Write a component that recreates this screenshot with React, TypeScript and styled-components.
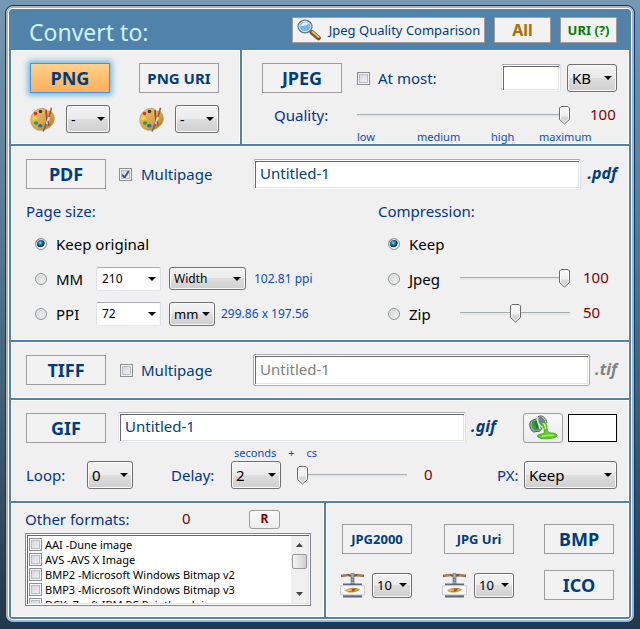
import React from 'react';
import styled, { createGlobalStyle, css } from 'styled-components';

const svgUrl = (svg: string) => `url("data:image/svg+xml,${encodeURIComponent(svg)}")`;

const thumbArt = svgUrl(
  `<svg xmlns="http://www.w3.org/2000/svg" width="11" height="19" viewBox="0 0 11 19"><defs><linearGradient id="g" x1="0" y1="0" x2="0" y2="1"><stop offset="0" stop-color="#fafafa"/><stop offset=".55" stop-color="#eeeeee"/><stop offset=".6" stop-color="#d8d8d8"/><stop offset="1" stop-color="#cfcfcf"/></linearGradient></defs><path d="M2 .5H9L10.500 2V13.500L5.500 18L.5 13.500V2Z" fill="url(#g)" stroke="#6b6b6b"/><path d="M1.500 2V13L5.500 16.700L9.500 13V2" fill="none" stroke="#fff" stroke-width=".8"/></svg>`
);
const tickArt = svgUrl(
  `<svg xmlns="http://www.w3.org/2000/svg" width="9" height="9" viewBox="0 0 9 9"><path d="M1.200 4.600L3.500 7.600L8 .8" fill="none" stroke="#3f4d8c" stroke-width="1.900"/></svg>`
);

const GlobalStyle = createGlobalStyle`
  * { box-sizing: border-box; }
  html { min-height: 100%; background: linear-gradient(#7599b3, #4d6d86 50%, #22384b); }
  body { margin: 0; font: 15px/20px "Noto Sans", "Open Sans", sans-serif; color: #003399; }
  button, input, select { font-family: inherit; margin: 0; }
`;

const Frame = styled.main`
  margin: 5px 5px 6px;
  padding: 5px;
  border: 1px solid #003c80;
  border-radius: 8px;
  background: #5182aa;
  box-shadow: inset 0 0 0 2px #b3b3b5, inset 0 0 0 3px #fff;
  display: grid;
  gap: 2px;
`;

const Header = styled.header`
  height: 37px;
  padding: 0 12px 0 18px;
  display: flex;
  align-items: center;
  gap: 9px;
`;

const Title = styled.h1`
  margin: 0 auto 0 0;
  font-size: 23px;
  line-height: 32px;
  font-weight: 400;
  color: #cdf3ff;
  padding-top: 5px;
`;

const Split = styled.div<{ $cols: string }>`
  display: grid;
  grid-template-columns: ${p => p.$cols};
  gap: 2px;
`;

const Panel = styled.section<{ $pad: string }>`
  background: #f0f0f0;
  border: 1px solid #fff;
  padding: ${p => p.$pad};
  min-width: 0;
`;

const Row = styled.div<{ $gap?: number; $top?: number; $indent?: number; $h?: number }>`
  display: flex;
  align-items: center;
  gap: ${p => p.$gap ?? 0}px;
  margin-top: ${p => p.$top ?? 0}px;
  padding-left: ${p => p.$indent ?? 0}px;
  ${p => p.$h && css`height: ${p.$h}px;`}
`;

const Spacer = styled.span`
  flex: 1;
`;

const FormatButton = styled.button<{ $size?: number; $w?: number; $active?: boolean }>`
  flex: none;
  width: ${p => p.$w ?? 80}px;
  height: 30px;
  padding: 0;
  border: 1px solid #9d9d9d;
  background: #f2f2f2;
  color: #003c80;
  font-size: ${p => p.$size ?? 18}px;
  line-height: 28px;
  font-weight: 700;
  white-space: nowrap;
  ${p => p.$active && css`
    border-color: #3c94f0;
    background: linear-gradient(#ffd08a, #ffae5a);
    box-shadow: 0 0 6px 2px #6cb4d8;
  `}
`;

const HeaderButton = styled.button<{ $w: number; $color: string; $size: number; $bold?: boolean }>`
  width: ${p => p.$w}px;
  height: 26px;
  margin-top: 1px;
  padding: 0;
  border: 1px solid #9d9d9d;
  background: #f2f2f2;
  color: ${p => p.$color};
  font-size: ${p => p.$size}px;
  font-weight: ${p => (p.$bold ? 700 : 400)};
  display: flex;
  align-items: center;
  justify-content: center;
  gap: 8px;
  white-space: nowrap;
`;

const FormatGroup = styled.div`
  display: grid;
  gap: 12px;
  width: 80px;
`;

const IconRow = styled.div`
  display: flex;
  align-items: center;
  justify-content: space-between;
`;

const SelectBox = styled.span<{ $w: number; $h: number; $plain?: boolean }>`
  position: relative;
  flex: none;
  display: inline-flex;
  width: ${p => p.$w}px;
  height: ${p => p.$h}px;
  &::after {
    content: '';
    position: absolute;
    right: 5px;
    top: calc(50% - 2px);
    border: solid transparent;
    border-width: 4px 4px 0;
    border-top-color: #000;
    pointer-events: none;
  }
  select {
    appearance: none;
    width: 100%;
    height: 100%;
    padding: 0 4px;
    border: 1px solid #707070;
    border-radius: 3px;
    color: #000;
    background: linear-gradient(#f2f2f2, #ebebeb 50%, #dddddd 50%, #cfcfcf);
    box-shadow: inset 0 0 0 1px #fafafa;
    ${p => p.$plain && css`
      background: #fff;
      border-color: #abadb3 #dbdfe6 #e3e9ef #e2e3ea;
      border-radius: 2px;
      padding-left: 5px;
    `}
  }
`;

const SizedSelect = styled.select<{ $size: number }>`
  font-size: ${p => p.$size}px;
`;

const TextInput = styled.input<{ $w?: number; $h?: number }>`
  ${p => (p.$w ? css`width: ${p.$w}px; flex: none;` : css`flex: 1; min-width: 0; width: 0;`)}
  height: ${p => p.$h ?? 31}px;
  padding: 0 6px 3px;
  border: 1px solid;
  border-color: #abadb3 #dbdfe6 #e3e9ef #e2e3ea;
  border-radius: 2px;
  background: #fff;
  box-shadow: inset 0 0 0 1px #fff, inset 2px 2px 0 #696969, inset 0 0 0 2px #e3e3e3;
  color: #004080;
  font-size: 15px;
  &:disabled { color: #808080; border-color: #abadb3; }
`;

const Extension = styled.span<{ $muted?: boolean }>`
  font-size: 16px;
  font-weight: 700;
  font-style: italic;
  padding-bottom: 3px;
  color: ${p => (p.$muted ? '#808080' : '#003c80')};
`;

const Check = styled.input`
  appearance: none;
  flex: none;
  width: 13px;
  height: 13px;
  border: 1px solid #8e8f8f;
  background: linear-gradient(135deg, #cdd0d6, #f6f6f6);
  box-shadow: inset 0 0 0 1px #f4f4f4, inset 0 0 0 2px #b9bcc3;
  &:checked { background: ${tickArt} center no-repeat, linear-gradient(135deg, #cdd0d6, #f6f6f6); }
`;

const Radio = styled.input`
  appearance: none;
  flex: none;
  width: 12px;
  height: 12px;
  border: 1px solid #8e8f8f;
  border-radius: 50%;
  background: radial-gradient(circle at 60% 60%, #f0f0f0, #cfd2d6 70%);
  box-shadow: inset 0 0 0 1px #f6f6f6;
  &:checked { background: radial-gradient(circle at 42% 38%, #8fe2f8 0, #2089b4 20%, #0c3a5c 42%, #12405f 50%, #e6e6e6 56%); }
`;

const Choice = styled.label<{ $gap: number; $color?: string; $w?: number }>`
  display: inline-flex;
  align-items: center;
  gap: ${p => p.$gap}px;
  color: ${p => p.$color ?? '#000'};
  white-space: nowrap;
  ${p => p.$w && css`width: ${p.$w}px;`}
`;

const Slider = styled.input`
  appearance: none;
  flex: 1;
  min-width: 0;
  width: 0;
  height: 19px;
  background: linear-gradient(#a8acae, #a8acae) 0 8px / 100% 1px no-repeat, linear-gradient(#e4e8e8, #e4e8e8) 0 9px / 100% 2px no-repeat;
  &::-webkit-slider-thumb {
    appearance: none;
    width: 11px;
    height: 19px;
    background: ${thumbArt} center no-repeat;
  }
`;

const Value = styled.output<{ $w: number }>`
  width: ${p => p.$w}px;
  padding-bottom: 3px;
  color: #800000;
`;

const Ticks = styled.div`
  display: grid;
  grid-template-columns: 60fr 74fr 48fr 78fr;
  margin: 4px 0 0 95px;
  font-size: 11px;
  line-height: 13px;
  color: #0c4acb;
`;

const Columns = styled.div`
  display: grid;
  grid-template-columns: 352fr 239fr;
  margin-top: 12px;
`;

const Heading = styled.h2`
  margin: 0 0 5px;
  font-size: 15px;
  line-height: 20px;
  font-weight: 400;
`;

const Note = styled.span`
  font-size: 12px;
  color: #0c4acb;
  white-space: nowrap;
`;

const DelayGrid = styled.div`
  display: grid;
  grid-template-columns: auto minmax(0, 1fr);
  column-gap: 16px;
  flex: 1;
  min-width: 0;
`;

const Units = styled.div`
  grid-column: 1 / -1;
  display: flex;
  gap: 12px;
  padding-left: 3px;
  font-size: 11px;
  line-height: 20px;
  height: 18px;
  color: #0c4acb;
`;

const LabelText = styled.label<{ $w?: number }>`
  white-space: nowrap;
  ${p => p.$w && css`width: ${p.$w}px;`}
`;

const BucketButton = styled.button`
  flex: none;
  width: 40px;
  height: 30px;
  padding: 0;
  border: 1px solid #9d9d9d;
  border-radius: 3px;
  background: linear-gradient(#f8f8f8, #ececf0);
  display: grid;
  place-items: center;
`;

const Swatch = styled.button`
  flex: none;
  width: 49px;
  height: 28px;
  padding: 0;
  border: 1px solid #000;
  background: #fff;
`;

const ResetButton = styled.button`
  width: 31px;
  height: 19px;
  padding: 0;
  border: 1px solid #9d9d9d;
  border-radius: 3px;
  background: linear-gradient(#fafafa, #ececec);
  color: #800000;
  font-size: 12px;
  line-height: 16px;
  font-weight: 700;
`;

const ListFrame = styled.div`
  display: flex;
  height: 73px;
  margin-top: 4px;
  border: 1px solid #828790;
  padding: 2px;
  background: #fff;
  box-shadow: inset 0 0 0 1px #fff, inset 2px 2px 0 #696969, inset 0 0 0 2px #e3e3e3;
`;

const FormatList = styled.ul`
  flex: 1;
  min-width: 0;
  margin: 0;
  padding: 1px 0 0 1px;
  list-style: none;
  overflow: hidden;
  li { display: flex; height: 15px; font-size: 11px; line-height: 15px; }
`;

const ScrollBar = styled.div`
  width: 17px;
  background: #f0f0f0;
  display: flex;
  flex-direction: column;
  align-items: center;
`;

const ScrollThumb = styled.span`
  width: 15px;
  height: 15px;
  margin-bottom: auto;
  border: 1px solid #979797;
  border-radius: 2px;
  background: linear-gradient(90deg, #f5f5f5, #e3e3e3 50%, #cfcfcf);
`;

const ScrollArrow = styled.button`
  width: 17px;
  height: 18px;
  padding: 0;
  border: 0;
  background: none;
  display: grid;
  place-items: center;
`;

const ButtonGrid = styled.div`
  display: grid;
  grid-template-columns: 72px 72px 70px;
  justify-content: space-between;
  align-items: center;
  row-gap: 16px;
`;

const Cell = styled.div`
  display: flex;
  align-items: center;
  justify-content: space-between;
`;

const EndCell = styled.div`
  display: flex;
  justify-content: flex-end;
`;

const Palette = () => (
  <svg width="25" height="25" viewBox="0 0 25 25" aria-hidden="true">
    <defs>
      <linearGradient id="wood" x1="0" y1="0" x2="1" y2="1">
        <stop offset="0" stopColor="#efcc86" />
        <stop offset=".6" stopColor="#d5a044" />
        <stop offset="1" stopColor="#a9701e" />
      </linearGradient>
    </defs>
    <path d="M.8 14C.3 7.500 5 2 12 1.300C15 1 16.500 3 18 4.500C20.500 3 24 6 24.300 11C24.600 17 18.500 23 11 23.300C5 23.500 1.200 19.500.8 14Z" fill="url(#wood)" stroke="#b98f4a" strokeWidth=".6" />
    <circle cx="10.500" cy="4.500" r="1.800" fill="#463b30" />
    <circle cx="5.500" cy="6.500" r="1.800" fill="#d9352b" />
    <ellipse cx="4.500" cy="11.300" rx="2.200" ry="1.700" fill="#f2dc18" />
    <ellipse cx="6" cy="16" rx="2.200" ry="1.700" fill="#2d9f3c" />
    <ellipse cx="10.200" cy="18.800" rx="2.200" ry="1.700" fill="#2468ba" />
    <path d="M21.500.7L18.800 11" stroke="#8f5b3c" strokeWidth="1.500" />
    <path d="M16 3L17 14L15 20" fill="none" stroke="#b7372c" strokeWidth="1.600" />
    <path d="M19 10L16.500 17" stroke="#dfe5eb" strokeWidth="2" />
    <path d="M16.500 17L13 24.500" stroke="#596c86" strokeWidth="1.600" />
    <path d="M18 14L19 19" stroke="#9c4f2e" strokeWidth="1.300" />
  </svg>
);

const Magnifier = () => (
  <svg width="24" height="22" viewBox="0 0 24 22" aria-hidden="true">
    <path d="M13 12L15.500 14" stroke="#898989" strokeWidth="3" />
    <path d="M15 13.500L21.500 19" stroke="#79522c" strokeWidth="4.600" strokeLinecap="round" />
    <path d="M15.500 13L21.500 18" stroke="#e4b864" strokeWidth="2" strokeLinecap="round" />
    <ellipse cx="8" cy="7.500" rx="7" ry="6.300" fill="#78b5e4" stroke="#6b7983" strokeWidth="1.300" />
    <ellipse cx="8" cy="7.500" rx="5.800" ry="5.100" fill="none" stroke="#d8e9f4" />
    <path d="M3.500 7C4.500 3.500 9 2 12 4.500C10 6.500 6.500 7 3.500 7Z" fill="#d8efff" />
  </svg>
);

const Bucket = () => (
  <svg width="29" height="25" viewBox="0 0 29 25" aria-hidden="true">
    <path d="M2 6C-.5 9 1 15 4.500 17L11 16L16 9L11 2Z" fill="#9ba4ae" stroke="#4c5561" />
    <path d="M3.500 6.500C2 10 3 14 6.500 15.500L11 14L8 5Z" fill="#2fa52c" />
    <path d="M5 7L10 5L12.500 12L8 14Z" fill="#168222" />
    <path d="M8 3L11 14" stroke="#e8ecef" strokeWidth="1.500" />
    <ellipse cx="13" cy="6.500" rx="3.800" ry="6" transform="rotate(-28 13 6.500)" fill="#77818d" stroke="#d8dce0" strokeWidth="1.500" />
    <path d="M9 2C13-1 17 3 18 8" fill="none" stroke="#525c67" />
    <path d="M11 7C15 7 18 8 18 12C18 16 19 18 23 18C29 18.500 30 22 24 23C18 24.500 9 24 8.500 21C8.500 18.500 15 20 15.500 17L14.500 11Z" fill="#65ce25" stroke="#2d9a19" strokeWidth=".8" />
    <path d="M14 8.500C16.500 9 16.500 11 16.500 14" fill="none" stroke="#c8f684" strokeWidth="1.300" />
    <path d="M13 21.300C17 20.500 21 20 25 20.300" fill="none" stroke="#b1f05a" strokeWidth="1.300" />
  </svg>
);

const Press = () => (
  <svg width="25" height="25" viewBox="0 0 25 25" aria-hidden="true">
    <path d="M1 2.800L8 2L12 3L17 2L24 2.800" fill="none" stroke="#80583a" strokeWidth="2.300" />
    <path d="M2 2H8M17 2H23" stroke="#c8a579" />
    <rect x="11" y="0" width="3" height="11" fill="#a9b1be" stroke="#5d6878" strokeWidth=".6" />
    <path d="M11 5L14 6M11 7.500L14 8.500" stroke="#4a566a" strokeWidth=".8" />
    <rect x="3" y="10.500" width="19" height="1.800" fill="#5c687c" />
    <rect x=".5" y="12.800" width="24" height="9" fill="#fafafa" stroke="#c5c5c5" strokeWidth=".8" />
    <path d="M5 17.500C8 14.500 15 14 20 16C19 19 11 20.500 7 19Z" fill="#d99a45" />
    <path d="M10 16L16 15.500L14 18.500L9 18.500Z" fill="#9a5228" />
    <path d="M7 17.500L12 17" stroke="#f3c642" strokeWidth="1.300" />
    <rect x="3" y="22.300" width="19" height="2.200" fill="#5c687c" />
  </svg>
);

type DropProps = { w: number; h?: number; size?: number; value: string; label: string; plain?: boolean; id?: string };
const Drop = ({ w, h = 28, size = 15, value, label, plain, id }: DropProps) => (
  <SelectBox $w={w} $h={h} $plain={plain}>
    <SizedSelect $size={size} id={id} aria-label={label} defaultValue={value}>
      <option>{value}</option>
    </SizedSelect>
  </SelectBox>
);

const PALETTE_FORMATS = [
  { name: 'PNG', size: 18, active: true },
  { name: 'PNG URI', size: 15, active: false },
];

const OTHER_FORMATS = [
  'AAI -Dune image',
  'AVS -AVS X Image',
  'BMP2 -Microsoft Windows Bitmap v2',
  'BMP3 -Microsoft Windows Bitmap v3',
  'DCX -Zsoft IBM PC Paintbrush image',
];

export default function App() {
  return (
    <>
      <GlobalStyle />
      <Frame>
        <Header>
          <Title>Convert to:</Title>
          <HeaderButton $w={193} $color="#003c80" $size={13}>
            <Magnifier />
            Jpeg Quality Comparison
          </HeaderButton>
          <HeaderButton $w={57} $color="#b86b00" $size={16} $bold>All</HeaderButton>
          <HeaderButton $w={57} $color="#008000" $size={13} $bold>URI (?)</HeaderButton>
        </Header>

        <Split $cols="229fr 387fr">
          <Panel $pad="12px 18px 10px">
            <Row $gap={29}>
              {PALETTE_FORMATS.map(f => (
                <FormatGroup key={f.name}>
                  <FormatButton $size={f.size} $active={f.active}>{f.name}</FormatButton>
                  <IconRow>
                    <Palette />
                    <Drop w={44} value="-" size={14} label={`${f.name} colors`} />
                  </IconRow>
                </FormatGroup>
              ))}
            </Row>
          </Panel>
          <Panel $pad="12px 11px 0 19px">
            <Row $h={30}>
              <FormatButton>JPEG</FormatButton>
              <Row $indent={15}>
                <Choice $gap={8} $color="#003c80"><Check type="checkbox" />At most:</Choice>
              </Row>
              <Spacer />
              <Row $gap={6}>
                <TextInput $w={60} $h={28} aria-label="Maximum size" />
                <Drop w={50} value="KB" label="Size unit" />
              </Row>
            </Row>
            <Row $top={11} $h={22} $indent={12}>
              <LabelText htmlFor="quality" $w={83}>Quality:</LabelText>
              <Slider id="quality" type="range" defaultValue={100} />
              <Row $indent={20}><Value $w={27}>100</Value></Row>
            </Row>
            <Ticks><span>low</span><span>medium</span><span>high</span><span>maximum</span></Ticks>
          </Panel>
        </Split>

        <Panel $pad="12px 11px 8px 14px">
          <Row $h={30}>
            <FormatButton>PDF</FormatButton>
            <Row $indent={13}>
              <Choice $gap={9} $color="#003c80" $w={134}><Check type="checkbox" defaultChecked />Multipage</Choice>
            </Row>
            <TextInput defaultValue="Untitled-1" aria-label="PDF file name" />
            <Row $indent={6}><Extension>.pdf</Extension></Row>
          </Row>
          <Columns>
            <div>
              <Heading>Page size:</Heading>
              <Row $h={35} $indent={9}>
                <Choice $gap={9}><Radio type="radio" name="page" defaultChecked />Keep original</Choice>
              </Row>
              <Row $h={35} $indent={9}>
                <Choice $gap={9} $w={61}><Radio type="radio" name="page" />MM</Choice>
                <Row $gap={8}>
                  <Drop w={65} h={24} size={12} plain value="210" label="Millimetres" />
                  <Drop w={77} h={23} size={12} value="Width" label="Dimension" />
                  <Note>102.81 ppi</Note>
                </Row>
              </Row>
              <Row $h={35} $indent={9}>
                <Choice $gap={9} $w={61}><Radio type="radio" name="page" />PPI</Choice>
                <Row $gap={8}>
                  <Drop w={65} h={24} size={12} plain value="72" label="Pixels per inch" />
                  <Drop w={46} h={24} size={13} value="mm" label="Unit" />
                </Row>
                <Row $indent={6}><Note>299.86 x 197.56</Note></Row>
              </Row>
            </div>
            <div>
              <Heading>Compression:</Heading>
              <Row $h={35} $indent={10}>
                <Choice $gap={9}><Radio type="radio" name="compression" defaultChecked />Keep</Choice>
              </Row>
              <Row $h={35} $indent={10}>
                <Choice $gap={9} $w={72}><Radio type="radio" name="compression" />Jpeg</Choice>
                <Slider type="range" defaultValue={100} aria-label="Jpeg compression" />
                <Row $indent={13}><Value $w={34}>100</Value></Row>
              </Row>
              <Row $h={35} $indent={10}>
                <Choice $gap={9} $w={72}><Radio type="radio" name="compression" />Zip</Choice>
                <Slider type="range" defaultValue={50} aria-label="Zip compression" />
                <Row $indent={13}><Value $w={34}>50</Value></Row>
              </Row>
            </div>
          </Columns>
        </Panel>

        <Panel $pad="12px 11px 12px 14px">
          <Row $h={30}>
            <FormatButton>TIFF</FormatButton>
            <Row $indent={14}>
              <Choice $gap={8} $color="#003c80" $w={133}><Check type="checkbox" />Multipage</Choice>
            </Row>
            <TextInput $h={32} disabled defaultValue="Untitled-1" aria-label="TIFF file name" />
            <Row $indent={5}><Extension $muted>.tif</Extension></Row>
          </Row>
        </Panel>

        <Panel $pad="11px 11px 11px 14px">
          <Row $h={31}>
            <FormatButton>GIF</FormatButton>
            <Row $indent={12} />
            <TextInput defaultValue="Untitled-1" aria-label="GIF file name" />
            <Row $indent={5}><Extension>.gif</Extension></Row>
            <Row $gap={5} $indent={27}>
              <BucketButton aria-label="Fill color"><Bucket /></BucketButton>
              <Swatch aria-label="Background color" />
            </Row>
          </Row>
          <Row>
            <Row $top={18}>
              <LabelText htmlFor="loop" $w={61}>Loop:</LabelText>
              <Drop w={46} id="loop" value="0" label="Loop" />
            </Row>
            <Row $top={18} $indent={38}>
              <LabelText htmlFor="delay" $w={60}>Delay:</LabelText>
            </Row>
            <DelayGrid>
              <Units><span>seconds</span><span>+</span><span>cs</span></Units>
              <Drop w={50} id="delay" value="2" label="Delay seconds" />
              <Row>
                <Slider type="range" defaultValue={0} aria-label="Delay hundredths" />
                <Row $indent={17}><Value $w={73}>0</Value></Row>
              </Row>
            </DelayGrid>
            <Row $top={18}>
              <LabelText htmlFor="px" $w={27}>PX:</LabelText>
              <Drop w={93} id="px" value="Keep" label="Pixels" />
            </Row>
          </Row>
        </Panel>

        <Split $cols="313fr 303fr">
          <Panel $pad="5px 12px 10px 13px">
            <Row $h={20}>
              <LabelText>Other formats:</LabelText>
              <Spacer />
              <Value $w={67}>0</Value>
              <ResetButton>R</ResetButton>
              <Row $indent={31} />
            </Row>
            <ListFrame>
              <FormatList>
                {OTHER_FORMATS.map(name => (
                  <li key={name}>
                    <Choice $gap={3}><Check type="checkbox" />{name}</Choice>
                  </li>
                ))}
              </FormatList>
              <ScrollBar>
                <ScrollArrow aria-label="Scroll up"><svg width="7" height="4"><path d="M0 4L3.500 0L7 4Z" fill="#444" /></svg></ScrollArrow>
                <ScrollThumb />
                <ScrollArrow aria-label="Scroll down"><svg width="7" height="4"><path d="M0 0L3.500 4L7 0Z" fill="#444" /></svg></ScrollArrow>
              </ScrollBar>
            </ListFrame>
          </Panel>
          <Panel $pad="20px 14px 16px 13px">
            <ButtonGrid>
              <EndCell><FormatButton $w={70} $size={13}>JPG2000</FormatButton></EndCell>
              <EndCell><FormatButton $w={70} $size={13}>JPG Uri</FormatButton></EndCell>
              <FormatButton $w={70}>BMP</FormatButton>
              <Cell><Press /><Drop w={40} h={25} size={13} value="10" label="JPG2000 quality" /></Cell>
              <Cell><Press /><Drop w={40} h={25} size={13} value="10" label="JPG Uri quality" /></Cell>
              <FormatButton $w={70}>ICO</FormatButton>
            </ButtonGrid>
          </Panel>
        </Split>
      </Frame>
    </>
  );
}
